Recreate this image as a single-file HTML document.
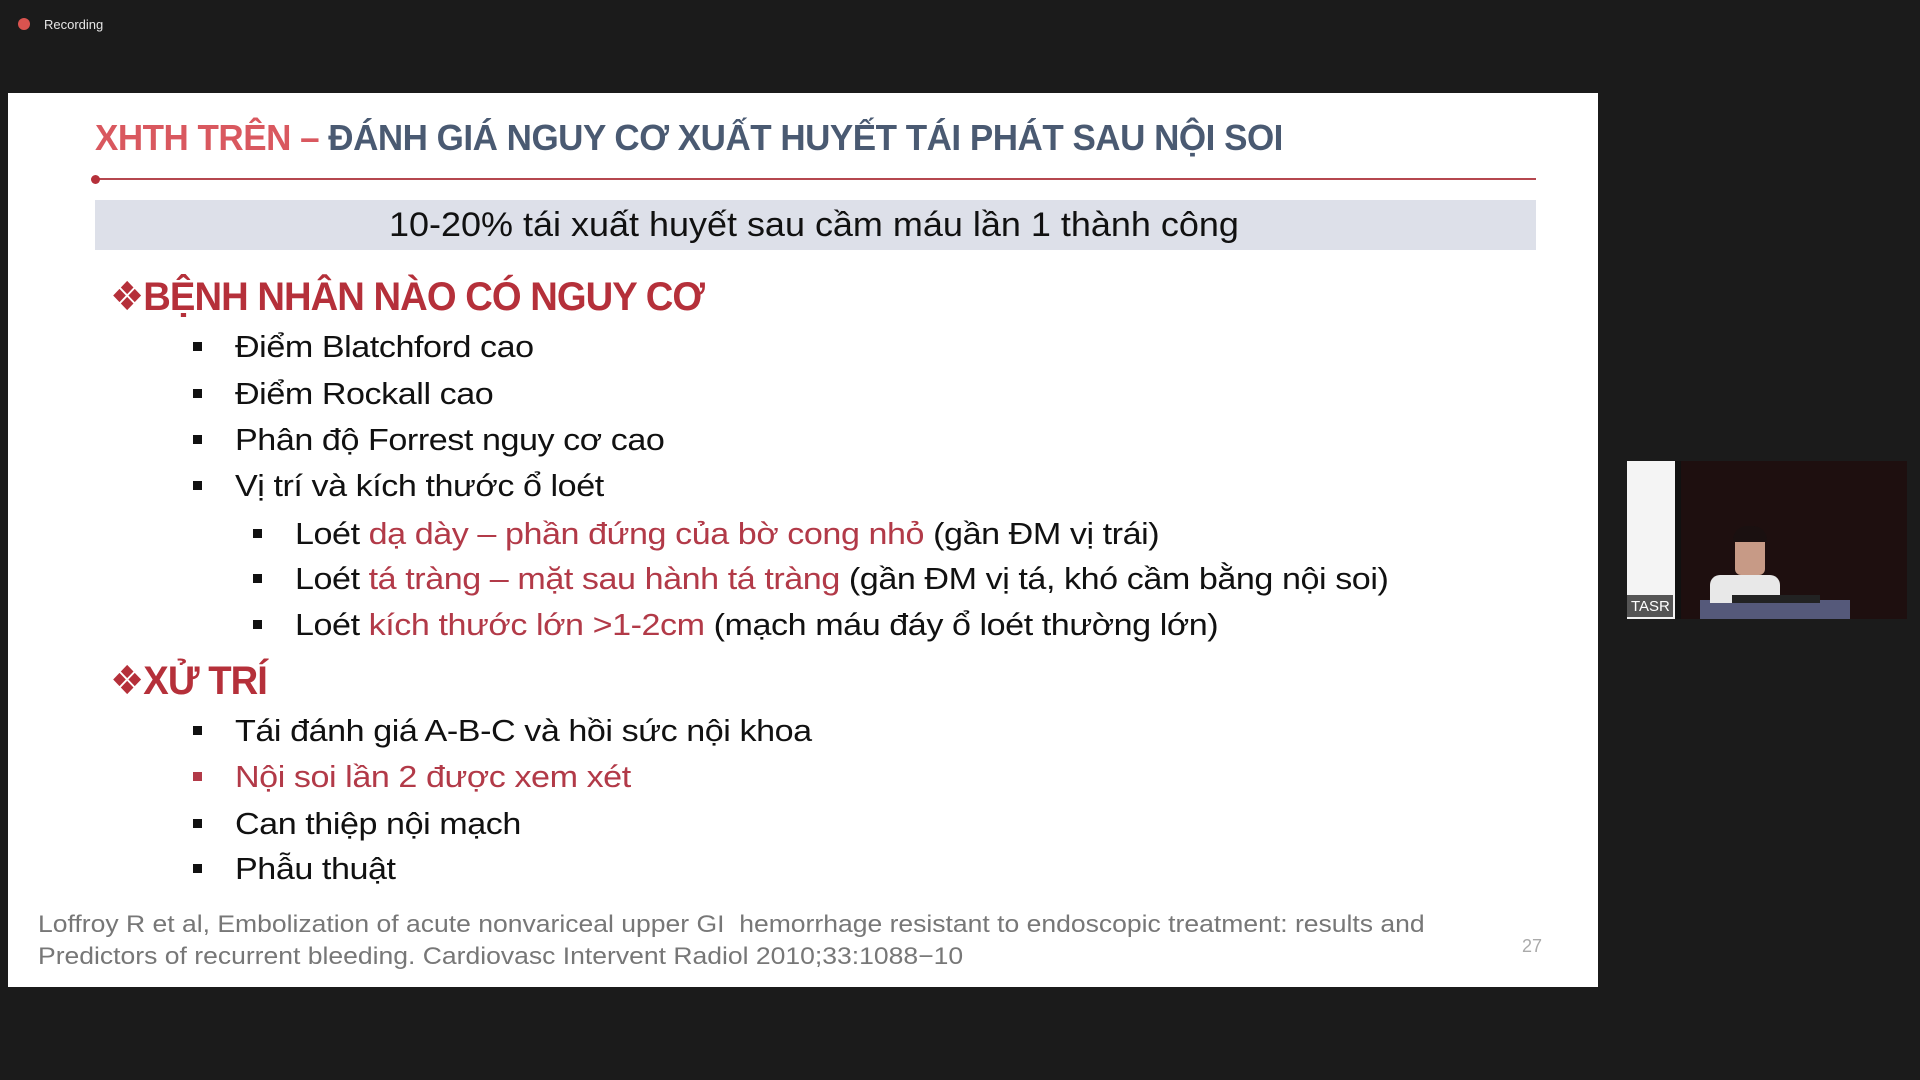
<!DOCTYPE html>
<html><head><meta charset="utf-8"><style>
*{margin:0;padding:0;box-sizing:border-box}
body{width:1920px;height:1080px;background:#1b1b1b;position:relative;overflow:hidden;font-family:"Liberation Sans","DejaVu Sans",sans-serif}
.a{position:absolute;white-space:nowrap}
#slide{position:absolute;left:8px;top:93px;width:1590px;height:894px;background:#fff}
.t{font-size:31px;color:#111;letter-spacing:-0.4px;line-height:1;transform:scaleX(1.1);transform-origin:left}
.r{color:#b23a48}
.sq{position:absolute;width:9px;height:9px;background:#111}
.h{font-size:40px;font-weight:bold;color:#b5303a;letter-spacing:-1px;transform:scaleX(0.955);transform-origin:left}
</style></head><body>
<div class="a" style="left:18px;top:18px;width:12px;height:12px;border-radius:50%;background:#d9534f"></div>
<div class="a" style="left:44px;top:17px;font-size:13px;color:#e6e6e6">Recording</div>
<div id="slide"></div>
<div class="a" style="left:95px;top:117px;font-size:36px;font-weight:bold;transform:scaleX(0.972);transform-origin:left;color:#4a5a72;letter-spacing:-0.5px"><span style="color:#d9585f">XHTH TRÊN – </span>ĐÁNH GIÁ NGUY CƠ XUẤT HUYẾT TÁI PHÁT SAU NỘI SOI</div>
<div class="a" style="left:95px;top:178px;width:1441px;height:2px;background:#b5474f"></div>
<div class="a" style="left:91px;top:175px;width:9px;height:9px;border-radius:50%;background:#b5303a"></div>
<div class="a" style="left:95px;top:200px;width:1441px;height:50px;background:#dde0e9"></div>
<div class="a" style="left:389px;top:206px;font-size:34px;color:#111;transform:scaleX(1.058);transform-origin:left">10-20% tái xuất huyết sau cầm máu lần 1 thành công</div>

<div class="a h" style="left:110px;top:274px">❖BỆNH NHÂN NÀO CÓ NGUY CƠ</div>
<div class="sq" style="left:193px;top:342px"></div><div class="a t" style="left:235px;top:331px">Điểm Blatchford cao</div>
<div class="sq" style="left:193px;top:389px"></div><div class="a t" style="left:235px;top:378px">Điểm Rockall cao</div>
<div class="sq" style="left:193px;top:435px"></div><div class="a t" style="left:235px;top:424px">Phân độ Forrest nguy cơ cao</div>
<div class="sq" style="left:193px;top:481px"></div><div class="a t" style="left:235px;top:470px">Vị trí và kích thước ổ loét</div>
<div class="sq" style="left:253px;top:529px"></div><div class="a t" style="left:295px;top:518px">Loét <span class="r">dạ dày – phần đứng của bờ cong nhỏ</span> (gần ĐM vị trái)</div>
<div class="sq" style="left:253px;top:574px"></div><div class="a t" style="left:295px;top:563px">Loét <span class="r">tá tràng – mặt sau hành tá tràng</span> (gần ĐM vị tá, khó cầm bằng nội soi)</div>
<div class="sq" style="left:253px;top:620px"></div><div class="a t" style="left:295px;top:609px">Loét <span class="r">kích thước lớn &gt;1-2cm</span> (mạch máu đáy ổ loét thường lớn)</div>

<div class="a h" style="left:110px;top:658px">❖XỬ TRÍ</div>
<div class="sq" style="left:193px;top:726px"></div><div class="a t" style="left:235px;top:715px">Tái đánh giá A-B-C và hồi sức nội khoa</div>
<div class="sq" style="left:193px;top:772px;background:#b23a48"></div><div class="a t r" style="left:235px;top:761px">Nội soi lần 2 được xem xét</div>
<div class="sq" style="left:193px;top:819px"></div><div class="a t" style="left:235px;top:808px">Can thiệp nội mạch</div>
<div class="sq" style="left:193px;top:864px"></div><div class="a t" style="left:235px;top:853px">Phẫu thuật</div>

<div class="a" style="left:38px;top:909px;font-size:24px;color:#777;line-height:32px;transform:scaleX(1.105);transform-origin:left">Loffroy R et al, Embolization of acute nonvariceal upper GI&nbsp; hemorrhage resistant to endoscopic treatment: results and<br>Predictors of recurrent bleeding. Cardiovasc Intervent Radiol 2010;33:1088−10</div>
<div class="a" style="left:1522px;top:936px;font-size:18px;color:#aaa">27</div>

<div class="a" style="left:1627px;top:461px;width:280px;height:158px;background:#1e0f0f"></div>
<div class="a" style="left:1627px;top:461px;width:48px;height:158px;background:#f4f4f4"></div>
<div class="a" style="left:1675px;top:461px;width:6px;height:158px;background:#111"></div>
<div class="a" style="left:1700px;top:600px;width:150px;height:19px;background:#55597a"></div>
<div class="a" style="left:1710px;top:575px;width:70px;height:28px;background:#e8e8e8;border-radius:10px 10px 0 0"></div>
<div class="a" style="left:1735px;top:530px;width:30px;height:45px;background:#c79a86;border-radius:12px 12px 6px 6px"></div>
<div class="a" style="left:1733px;top:526px;width:34px;height:16px;background:#1a1010;border-radius:14px 14px 2px 2px"></div>
<div class="a" style="left:1732px;top:595px;width:88px;height:8px;background:#222"></div>
<div class="a" style="left:1627px;top:595px;width:46px;height:22px;background:#555;color:#fff;font-size:15px;padding:3px 4px">TASR</div>
</body></html>
